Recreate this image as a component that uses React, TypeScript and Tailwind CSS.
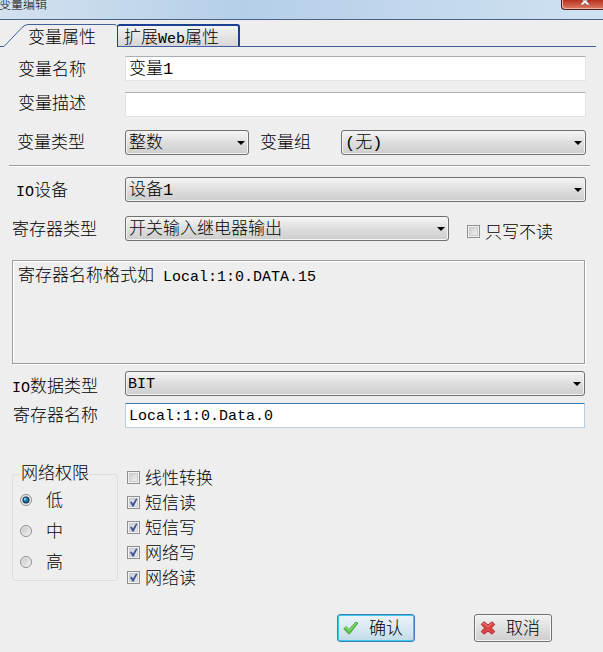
import type { ReactNode } from 'react'
import { useState } from 'react'

const labelText = 'h-[25px] text-[17px] leading-[29px] whitespace-nowrap'

function Latin({ children }: { children: ReactNode }) {
  return <span className="text-[15px]">{children}</span>
}

function TextField({ id, value, className = '' }: { id: string; value?: string; className?: string }) {
  return (
    <input
      id={id}
      type="text"
      defaultValue={value}
      className={`h-[25px] w-full min-w-0 border bg-white px-[3px] pt-[2px] outline-none ${className}`}
    />
  )
}

function Select({ id, value, className = '' }: { id: string; value: string; className?: string }) {
  return (
    <div className="relative w-full">
      <select
        id={id}
        defaultValue={value}
        className={`block h-[25px] w-full appearance-none rounded-[3px] border border-[#707070] bg-linear-to-b from-[#f3f3f3] from-5% via-[#dedede] via-50% to-[#cdcdcd] pt-[2px] pr-5 leading-[22px] shadow-[inset_0_0_0_1px_#f4f4f4] outline-none ${className}`}
      >
        <option>{value}</option>
      </select>
      <svg viewBox="0 0 8 4" className="pointer-events-none absolute top-[11px] right-1 h-1 w-2">
        <path d="M0 0h8L4 4z" fill="#000" />
      </svg>
    </div>
  )
}

function Check({ id, label, checked = false }: { id: string; label: string; checked?: boolean }) {
  return (
    <div className="flex h-[25px] items-center gap-[5px]">
      <span className="relative h-[13px] w-[13px]">
        <input
          id={id}
          type="checkbox"
          defaultChecked={checked}
          className="peer block h-[13px] w-[13px] appearance-none border border-[#8e8f8f] bg-linear-to-br from-[#c5c9ce] to-[#f6f6f6] shadow-[inset_0_0_0_1px_#f4f4f4,inset_0_0_0_2px_#c8ccd0]"
        />
        <svg viewBox="0 0 13 13" className="pointer-events-none absolute inset-0 hidden peer-checked:block">
          <path d="M3 6.2l1.6-.8L5.9 7.6 9 2.4l1.5.4L6.8 10.6H5.3z" fill="#42559c" />
        </svg>
      </span>
      <label htmlFor={id} className={labelText}>{label}</label>
    </div>
  )
}

function Radio({ id, label, checked = false }: { id: string; label: string; checked?: boolean }) {
  return (
    <div className="flex h-[31px] items-center gap-[14px]">
      <span className="relative h-3 w-3">
        <input
          id={id}
          type="radio"
          name="permission"
          defaultChecked={checked}
          className="peer block h-3 w-3 appearance-none rounded-full border border-[#8e8f8f] bg-linear-to-br from-[#bfc4c9] to-[#f6f6f6] shadow-[inset_0_0_0_1px_#eeeeee]"
        />
        <svg viewBox="0 0 12 12" className="pointer-events-none absolute inset-0 hidden peer-checked:block">
          <circle cx="6" cy="6" r="3.5" fill="#123c5c" />
          <circle cx="5.8" cy="5.8" r="2.3" fill="#2386b5" />
          <circle cx="5" cy="5" r="1" fill="#b5e4f5" />
        </svg>
      </span>
      <label htmlFor={id} className={labelText}>{label}</label>
    </div>
  )
}

function TitleBar() {
  return (
    <header className="flex h-5 items-start justify-between border-b border-[#4b6288] bg-linear-to-r from-[#d3e1ef] via-[#b4cfe8] via-40% to-[#d0e1f2]">
      <h1 className="-ml-px text-[12px] leading-[12px]">变量编辑</h1>
      <button
        type="button"
        aria-label="关闭"
        className="flex h-[10px] w-[42px] items-start justify-center rounded-bl-[4px] border-b border-l border-[#4d2020] bg-linear-to-b from-[#b92f1b] to-[#dc7a66] pl-1 shadow-[inset_1px_-1px_0_#eeb0a4]"
      >
        <svg viewBox="0 0 12 5" className="h-[5px] w-3">
          <path d="M3 0h6L8 1.4 11.5 5H7.6L6 3.2 4.4 5H.5L4 1.4z" fill="#f4f4f4" stroke="#5a3a3a" strokeWidth=".6" />
        </svg>
      </button>
    </header>
  )
}

function Tabs() {
  const [active, setActive] = useState(0)
  return (
    <div role="tablist" className="mt-1 mr-[7px] flex h-[23px]">
      <svg viewBox="0 0 28 23" className="h-[23px] w-7 shrink-0">
        <path d="M0 22.5h4L22 3.5Q25 .5 28 .5" fill="none" stroke="#3f5f9c" />
      </svg>
      <button
        type="button"
        role="tab"
        aria-selected={active === 0}
        onClick={() => setActive(0)}
        className="w-[89px] shrink-0 rounded-tr-[3px] border-t border-[#3f5f9c] pt-[3px] text-left text-[17px] leading-[22px] whitespace-nowrap"
      >
        变量属性
      </button>
      <button
        type="button"
        role="tab"
        aria-selected={active === 1}
        onClick={() => setActive(1)}
        className="w-[123px] shrink-0 rounded-t-[3px] border border-t-2 border-r-2 border-[#1c3f96] border-b-[#3f5f9c] bg-linear-to-b from-[#f4f4f4] to-[#d6d6d8] pt-[3px] pl-[6px] text-left text-[17px] leading-[20px] whitespace-nowrap"
      >
        扩展<Latin>Web</Latin>属性
      </button>
      <div className="flex-1 border-b border-[#3f5f9c]" />
    </div>
  )
}

export default function App() {
  return (
    <main className="min-h-screen bg-[#eeeeee] font-['Liberation_Mono','Noto_Sans_CJK_SC',monospace] font-light text-black">
      <TitleBar />
      <Tabs />
      <form className="pt-[9px] pr-[17px] pl-3" onSubmit={(e) => e.preventDefault()}>
        <div className="flex">
          <label htmlFor="name" className={`${labelText} w-[113px] shrink-0 pl-[6px]`}>变量名称</label>
          <TextField id="name" value="变量1" className="border-[#e2e3ea] border-t-[#abadb3] text-[17px]" />
        </div>
        <div className="mt-[11px] flex">
          <label htmlFor="desc" className={`${labelText} -mt-[2px] w-[113px] shrink-0 pl-[6px]`}>变量描述</label>
          <TextField id="desc" className="border-[#e2e3ea] border-t-[#abadb3] text-[17px]" />
        </div>
        <div className="mt-[13px] flex">
          <label htmlFor="type" className={`${labelText} -mt-px w-[113px] shrink-0 pl-[5px]`}>变量类型</label>
          <div className="w-[124px] shrink-0">
            <Select id="type" value="整数" className="pl-[3px] text-[17px]" />
          </div>
          <label htmlFor="group" className={`${labelText} -mt-px w-[92px] shrink-0 pl-[11px]`}>变量组</label>
          <Select id="group" value="(无)" className="pl-[3px] text-[17px]" />
        </div>
        <hr className="mt-[10px] -mr-1 -ml-[3px] h-[2px] border-t border-b border-t-[#9d9d9d] border-b-white" />
        <div className="mt-[10px] flex">
          <label htmlFor="device" className={`${labelText} w-[113px] shrink-0 pl-1`}>
            <Latin>IO</Latin>设备
          </label>
          <Select id="device" value="设备1" className="pl-[3px] text-[17px]" />
        </div>
        <div className="mt-[14px] flex items-end">
          <label htmlFor="regtype" className={`${labelText} w-[113px] shrink-0`}>寄存器类型</label>
          <Select id="regtype" value="开关输入继电器输出" className="pl-[3px] text-[17px]" />
          <div className="-mb-[3px] w-[137px] shrink-0 pl-[18px]">
            <Check id="writeonly" label="只写不读" />
          </div>
        </div>
        <div className="mt-[19px] mr-px h-[104px] border border-[#9d9d9d] pt-px pl-[5px] shadow-[1px_1px_0_#ffffff,inset_1px_1px_0_#ffffff]">
          <p className={labelText}>
            寄存器名称格式如<Latin> Local:1:0.DATA.15</Latin>
          </p>
        </div>
        <div className="mt-[7px] mr-px flex">
          <label htmlFor="datatype" className={`${labelText} w-[113px] shrink-0 pt-[2px]`}>
            <Latin>IO</Latin>数据类型
          </label>
          <Select id="datatype" value="BIT" className="pl-[2px] text-[15px]" />
        </div>
        <div className="mt-[7px] mr-px flex">
          <label htmlFor="regname" className={`${labelText} -mt-px w-[113px] shrink-0 pl-px`}>寄存器名称</label>
          <TextField id="regname" value="Local:1:0.Data.0" className="rounded-[1px] border-[#b5cfe7] border-t-[#3d7bad] text-[15px]" />
        </div>

        <div className="mt-[34px] flex items-start gap-[9px]">
          <fieldset className="h-[119px] w-[106px] rounded-[3px] border border-[#d5dfe5] pl-[7px]">
            <legend className="pl-px text-[17px] leading-[25px] whitespace-nowrap">网络权限</legend>
            <div className="-mt-[3px]">
              <Radio id="low" label="低" checked />
              <Radio id="mid" label="中" />
              <Radio id="high" label="高" />
            </div>
          </fieldset>
          <div className="flex flex-col pt-[3px]">
            <Check id="linear" label="线性转换" />
            <Check id="smsread" label="短信读" checked />
            <Check id="smswrite" label="短信写" checked />
            <Check id="netwrite" label="网络写" checked />
            <Check id="netread" label="网络读" checked />
          </div>
        </div>

        <div className="mt-6 mr-[34px] flex justify-end gap-[59px]">
          <button
            type="submit"
            className="flex h-7 w-[78px] items-center gap-[10px] rounded-[3px] border border-[#3c7fb1] bg-linear-to-b from-[#eaf4f9] via-[#d9e9f1] via-50% to-[#c1dce9] pl-[5px] text-[17px] whitespace-nowrap shadow-[inset_0_0_0_1px_#3fc8ee]"
          >
            <svg viewBox="0 0 16 14" className="h-[14px] w-4 shrink-0">
              <path d="M.8 7.5L3.2 5.6 6 8.4 12.8 1l2.2 1L6.8 12.8 5 12.6z" fill="#55c43f" stroke="#49964a" strokeWidth=".8" strokeLinejoin="round" />
              <path d="M2 7.3l1.2-.7L6 9.6l7-7.3" fill="none" stroke="#a4e58d" />
            </svg>
            <span className="pt-1">确认</span>
          </button>
          <button
            type="button"
            className="flex h-7 w-[78px] items-center gap-[10px] rounded-[3px] border border-[#707070] bg-linear-to-b from-[#f2f2f2] via-[#dfdfdf] via-50% to-[#cfcfcf] pl-[5px] text-[17px] whitespace-nowrap shadow-[inset_0_0_0_1px_#f7f7f7]"
          >
            <svg viewBox="0 0 16 14" className="h-[14px] w-4 shrink-0">
              <path d="M4 .8L8 4l4-3.2 2.8 2.6L11.4 7l3.4 3.6-2.8 2.6L8 10l-4 3.2-2.8-2.6L4.6 7 1.2 3.4z" fill="#dc4545" stroke="#b22a30" strokeLinejoin="round" />
              <path d="M3 3.2l1-1L8 5.6l4-3.4" fill="none" stroke="#f08a86" />
            </svg>
            <span className="pt-1">取消</span>
          </button>
        </div>
      </form>
    </main>
  )
}
